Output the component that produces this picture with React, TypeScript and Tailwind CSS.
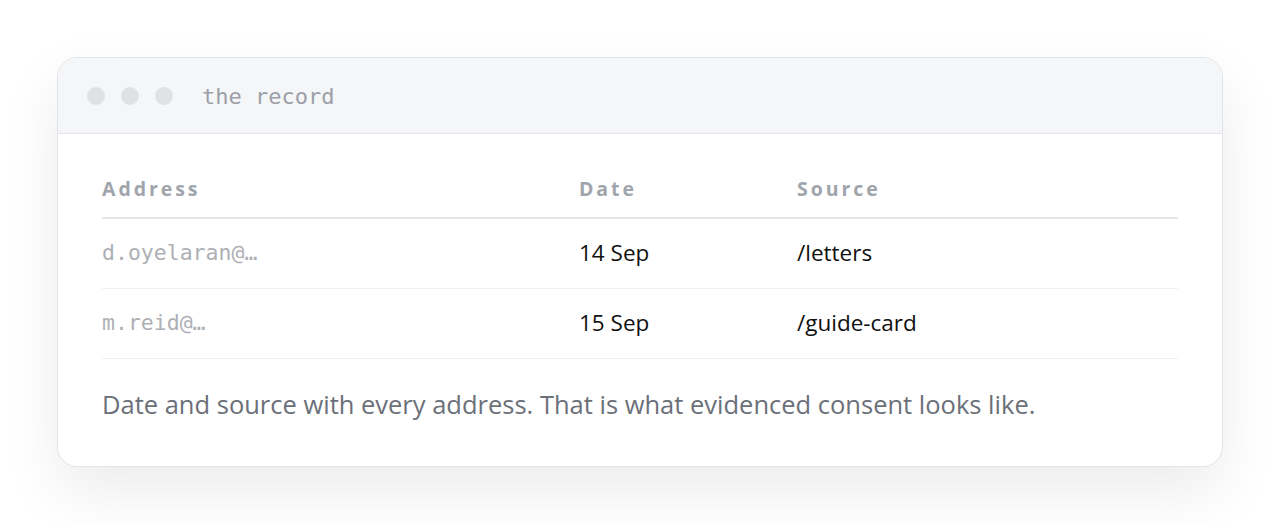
const rows = [
  { address: "d.oyelaran@…", date: "14 Sep", source: "/letters" },
  { address: "m.reid@…", date: "15 Sep", source: "/guide-card" },
];

export default function App() {
  return (
    <div className="min-h-screen bg-white p-[57px] font-['Open_Sans',sans-serif]">
      <div className="overflow-hidden rounded-[20px] border border-[#e3e4e7] bg-white shadow-[0_24px_60px_rgba(0,0,0,0.08)]">
        <div className="flex h-[76px] items-center gap-4 border-b border-[#e3e5e8] bg-[#f5f6f7] px-[29px]">
          <div className="flex gap-4">
            <span className="size-[18px] rounded-full bg-[#dfe1e4]" />
            <span className="size-[18px] rounded-full bg-[#dfe1e4]" />
            <span className="size-[18px] rounded-full bg-[#dfe1e4]" />
          </div>
          <span className="mt-[2px] ml-[13px] font-['DejaVu_Sans_Mono',monospace] text-[22px] text-[#9ca0a8]">
            the record
          </span>
        </div>

        <div className="px-[44px] pt-[43px] pb-[46px]">
          <table className="w-full border-collapse text-left">
            <thead>
              <tr className="border-b-2 border-[#e5e6e8]">
                <th className="w-[477px] pb-4 text-[19.5px] leading-6 font-bold tracking-[0.15em] text-[#a0a4ab]">Address</th>
                <th className="w-[218px] pb-4 text-[19.5px] leading-6 font-bold tracking-[0.15em] text-[#a0a4ab]">Date</th>
                <th className="pb-4 text-[19.5px] leading-6 font-bold tracking-[0.15em] text-[#a0a4ab]">Source</th>
              </tr>
            </thead>
            <tbody>
              {rows.map((r) => (
                <tr key={r.address} className="h-[70px] border-b border-[#f0f1f2]">
                  <td className="font-['DejaVu_Sans_Mono',monospace] text-[21.5px] font-light text-[#adb0b5]">{r.address}</td>
                  <td className="text-[22.5px] text-[#111]">{r.date}</td>
                  <td className="text-[22.5px] text-[#111]">{r.source}</td>
                </tr>
              ))}
            </tbody>
          </table>
          <p className="mt-[29px] text-[25.5px] leading-[32px] text-[#6b7079]">
            Date and source with every address. That is what evidenced consent looks like.
          </p>
        </div>
      </div>
    </div>
  );
}
